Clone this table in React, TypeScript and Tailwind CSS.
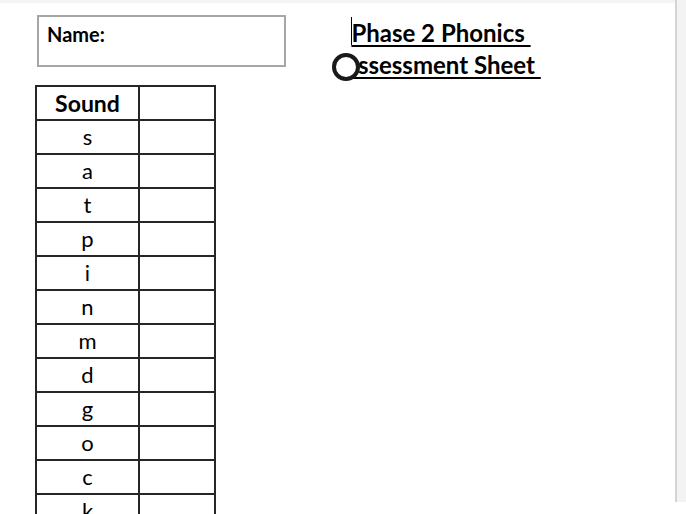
import React from "react";

const sounds = ["s", "a", "t", "p", "i", "n", "m", "d", "g", "o", "c", "k", "e", "u"];

export default function App() {
  return (
    <div
      className="relative flex h-[514px] w-[686px] overflow-hidden bg-white text-black"
      style={{ fontFamily: "Lato, 'Open Sans', sans-serif" }}
    >
      {/* Page */}
      <div className="flex-1 border-t-[3px] border-[#f4f4f4]">
        <div className="flex">
          {/* Left column */}
          <div className="flex w-[300px] flex-col pl-[35px] pt-[12px]">
            <div className="ml-[2px] h-[52px] w-[249px] border-2 border-[#a6a6a6] px-[8px] pt-[2px] text-[20px] font-bold">
              Name:
            </div>
            <table className="mt-[18px] w-[181px] border-collapse border-2 border-[#262626]">
              <tbody>
                <tr className="h-[34px]">
                  <td className="w-[103px] border-2 border-[#262626] p-0 text-center text-[23px] leading-[30px] font-bold">
                    Sound
                  </td>
                  <td className="border-2 border-[#262626]"></td>
                </tr>
                {sounds.map((s) => (
                  <tr key={s} className="h-[34px]">
                    <td className="border-2 border-[#262626] p-0 text-center text-[22px] leading-[30px]">{s}</td>
                    <td className="border-2 border-[#262626]"></td>
                  </tr>
                ))}
              </tbody>
            </table>
          </div>

          {/* Title */}
          <div className="ml-[30px] flex w-[222px] flex-col items-center pt-[14px] text-[24px] font-bold leading-[32px]">
            <span className="underline decoration-2 underline-offset-[3px]">Phase 2 Phonics&nbsp;</span>
            <span className="underline decoration-2 underline-offset-[3px]">Assessment Sheet&nbsp;</span>
          </div>
        </div>
      </div>

      {/* Right scrollbar strip */}
      <div className="h-[502px] w-[11px] border-l-2 border-[#d4d4d4] bg-[#f3f3f3]"></div>

      {/* Text cursor */}
      <div className="absolute left-[351px] top-[17px] h-[28px] w-px bg-black"></div>
      {/* Pointer ring */}
      <div className="absolute left-[332px] top-[53px] h-[28px] w-[28px] rounded-full border-[4px] border-[#1a1a1a] bg-white"></div>
    </div>
  );
}
